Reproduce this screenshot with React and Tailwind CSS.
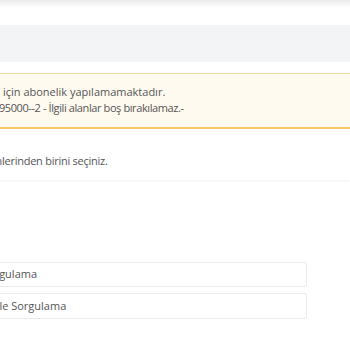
export default function App() {
  return (
    <div className="w-[350px] h-[350px] overflow-hidden bg-white font-['Open_Sans',sans-serif] text-[11px] text-[#555]">
      <div className="h-[8px] bg-gradient-to-b from-[#ebebeb] to-white" />
      <div className="h-[17px]" />
      <div className="h-[37px] bg-[#f3f4f6]" />
      <div className="h-[11px]" />
      <div className="h-[56px] border-t border-[#efdcaa] border-b-2 border-b-[#f6c660] bg-[#fffaf0] pt-[10px] leading-[16px]">
        <div className="-ml-[6px] whitespace-nowrap">a için abonelik yapılamamaktadır.</div>
        <div className="-ml-[7px] whitespace-nowrap tracking-[-0.4px]">195000--2 - İlgili alanlar boş bırakılamaz.-</div>
      </div>
      <div className="h-[13px]" />
      <div className="h-[38px] bg-white shadow-[0_1px_3px_rgba(0,0,0,0.06)] flex items-center">
        <div className="-ml-[8px] whitespace-nowrap tracking-[-0.25px]">mlerinden birini seçiniz.</div>
      </div>
      <div className="h-[82px]" />
      <div className="w-[307px] flex flex-col gap-[6px]">
        <div className="h-[25px] border border-[#ebebeb] rounded-r-[3px] border-l-0 flex items-center">
          <div className="-ml-[18px] whitespace-nowrap">Sorgulama</div>
        </div>
        <div className="h-[26px] border border-[#ebebeb] rounded-r-[3px] border-l-0 flex items-center">
          <div className="-ml-[9px] whitespace-nowrap">ı ile Sorgulama</div>
        </div>
      </div>
    </div>
  );
}
